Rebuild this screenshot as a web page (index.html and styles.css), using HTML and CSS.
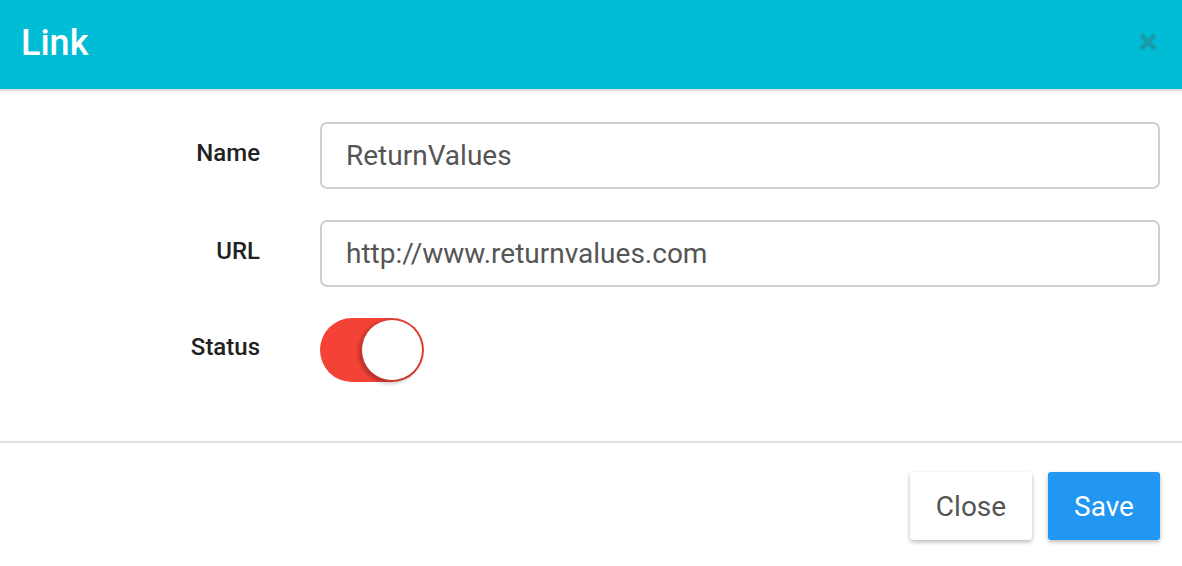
FILE: index.html
```html
<!DOCTYPE html>
<html>
<head>
<meta charset="utf-8">
<link rel="stylesheet" href="styles.css">
</head>
<body>
<div class="modal">
  <header class="modal-header">
    <h1 class="modal-title">Link</h1>
    <button class="close-x" aria-label="Close">
      <svg width="20" height="20" viewBox="0 0 20 20"><path d="M3 3 L17 17 M17 3 L3 17" stroke="currentColor" stroke-width="5" stroke-linecap="butt"/></svg>
    </button>
  </header>
  <main class="modal-body">
    <div class="form-row">
      <label class="form-label">Name</label>
      <div class="form-input">ReturnValues</div>
    </div>
    <div class="form-row">
      <label class="form-label">URL</label>
      <div class="form-input">http://www.returnvalues.com</div>
    </div>
    <div class="form-row">
      <label class="form-label">Status</label>
      <div class="toggle on"><span class="knob"></span></div>
    </div>
  </main>
  <footer class="modal-footer">
    <button class="btn btn-default">Close</button>
    <button class="btn btn-primary">Save</button>
  </footer>
</div>
</body>
</html>
```

FILE: styles.css
```css
* { box-sizing: border-box; }
html, body { margin: 0; padding: 0; background: #fff; }
body { font-family: Roboto, "Noto Sans", "Liberation Sans", sans-serif; width: 1182px; height: 566px; overflow: hidden; }

.modal-header {
  height: 91px;
  background: #00bcd4;
  border-bottom: 2px solid #dcdcdc;
  display: flex;
  align-items: center;
  justify-content: space-between;
  padding: 0 24px 0 21px;
}
.modal-title {
  margin: 0;
  color: #fff;
  font-size: 36px;
  font-weight: 500;
  line-height: 1;
  margin-top: -4px;
}
.close-x {
  background: none;
  border: 0;
  padding: 0;
  color: #189cad;
  display: flex;
  margin-top: -6px;
}

.modal-body {
  padding: 31px 22px 59px 0;
  display: flex;
  flex-direction: column;
  gap: 31px;
  border-bottom: 2px solid #e0e0e0;
}
.form-row {
  display: flex;
  align-items: center;
  gap: 60px;
}
.form-label {
  width: 260px;
  text-align: right;
  font-size: 24px;
  font-weight: 500;
  color: #222;
  margin-top: -6px;
}
.form-input {
  flex: 1;
  height: 67px;
  border: 2px solid #cfcfcf;
  border-radius: 7px;
  padding: 0 24px;
  display: flex;
  align-items: center;
  font-size: 28px;
  color: #555;
}

.toggle {
  width: 104px;
  height: 64px;
  border-radius: 32px;
  background: #f44336;
  position: relative;
}
.toggle .knob {
  position: absolute;
  right: 1px;
  top: 1px;
  width: 62px;
  height: 62px;
  border-radius: 50%;
  background: #fff;
  border: 1.5px solid #d0342c;
  box-shadow: -2px 2px 4px rgba(0,0,0,0.3);
}

.modal-footer {
  display: flex;
  justify-content: flex-end;
  gap: 16px;
  padding: 29px 22px 0 0;
}
.btn {
  height: 68px;
  border: 0;
  border-radius: 3px;
  font-family: inherit;
  font-size: 28px;
  padding: 0;
  box-shadow: 0 2px 4px rgba(0,0,0,0.28);
}
.btn-default { background: #fff; color: #555; width: 122px; }
.btn-primary { background: #2196f3; color: #fff; width: 112px; }
```
